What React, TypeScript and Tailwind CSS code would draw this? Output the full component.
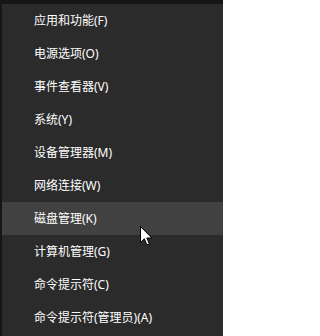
const items = [
  "应用和功能(F)",
  "电源选项(O)",
  "事件查看器(V)",
  "系统(Y)",
  "设备管理器(M)",
  "网络连接(W)",
  "磁盘管理(K)",
  "计算机管理(G)",
  "命令提示符(C)",
  "命令提示符(管理员)(A)",
];

function Cursor() {
  return (
    <svg
      className="pointer-events-none absolute left-[140px] top-[226px]"
      width="13"
      height="20"
      viewBox="0 0 13 20"
    >
      <path
        d="M0.5 0.5 L0.5 16.5 L4.3 12.8 L6.9 18.8 L9.3 17.8 L6.8 12 L11.8 12 Z"
        fill="#ffffff"
        stroke="#000000"
        strokeWidth="1"
        strokeLinejoin="miter"
      />
    </svg>
  );
}

export default function App() {
  return (
    <div className="relative h-[336px] w-[223px] overflow-hidden bg-[#161616]">
      <div className="ml-[2px] mt-[4px] flex h-[332px] flex-col bg-[#2b2b2b] font-['Noto_Sans','Noto_Sans_CJK_SC',sans-serif] text-[12px] text-white">
        {items.map((label, i) => (
          <div
            key={label}
            className={
              i === 6
                ? "flex h-[33px] items-center bg-[#414141] pl-[32px]"
                : "flex h-[33px] items-center pl-[32px]"
            }
          >
            {label}
          </div>
        ))}
      </div>
      <Cursor />
    </div>
  );
}
